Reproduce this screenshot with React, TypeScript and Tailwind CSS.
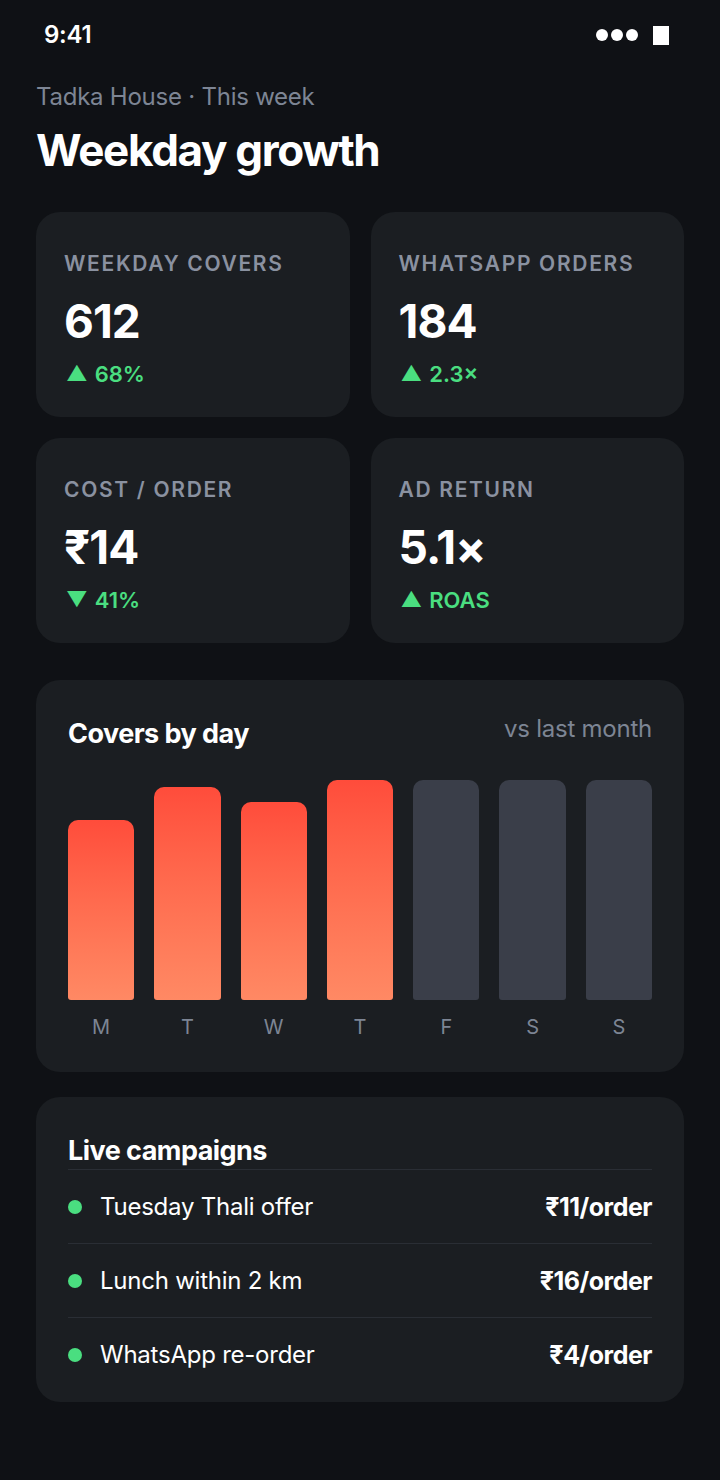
const stats = [
  { label: "WEEKDAY COVERS", value: "612", arrow: "▲", delta: "68%" },
  { label: "WHATSAPP ORDERS", value: "184", arrow: "▲", delta: "2.3×" },
  { label: "COST / ORDER", value: "₹14", arrow: "▼", delta: "41%" },
  { label: "AD RETURN", value: "5.1×", arrow: "▲", delta: "ROAS" },
];

const days = [
  { day: "M", pct: 82, live: true },
  { day: "T", pct: 97, live: true },
  { day: "W", pct: 90, live: true },
  { day: "T", pct: 100, live: true },
  { day: "F", pct: 100, live: false },
  { day: "S", pct: 100, live: false },
  { day: "S", pct: 100, live: false },
];

const campaigns = [
  { name: "Tuesday Thali offer", cost: "₹11/order" },
  { name: "Lunch within 2 km", cost: "₹16/order" },
  { name: "WhatsApp re-order", cost: "₹4/order" },
];

function StatCard({ label, value, arrow, delta }: { label: string; value: string; arrow: string; delta: string }) {
  return (
    <div className="bg-[#1b1e22] rounded-[24px] h-[205px] px-7 pt-[38px] flex flex-col">
      <p className="text-[21px] leading-[28px] font-semibold tracking-[0.08em] text-[#8a91a0]">{label}</p>
      <p className="mt-[17px] text-[46px] leading-[52px] font-bold tracking-[-0.02em] text-white">{value}</p>
      <p className="mt-[13px] flex items-center gap-[7px] text-[22px] leading-[28px] font-semibold text-[#4ade80]">
        <span className="text-[21px] leading-[28px] pl-[2px]">{arrow}</span>
        <span>{delta}</span>
      </p>
    </div>
  );
}

export default function App() {
  return (
    <div className="w-[720px] min-h-[1480px] bg-[#0f1115] font-['Inter',sans-serif] text-white">
      {/* Status bar */}
      <div className="h-[70px] pl-[44px] pr-[51px] flex items-center justify-between">
        <span className="text-[24px] leading-[28px] font-semibold tracking-[-0.01em]">9:41</span>
        <div className="flex items-center gap-[3px]">
          <span className="size-[12px] rounded-full bg-white" />
          <span className="size-[12px] rounded-full bg-white" />
          <span className="size-[12px] rounded-full bg-white" />
          <span className="ml-[12px] w-[16px] h-[19px] bg-white" />
        </div>
      </div>

      <div className="px-9">
        <p className="mt-[11px] text-[24px] leading-[32px] text-[#7d8594] tracking-[-0.01em]">Tadka House · This week</p>
        <h1 className="mt-[11px] text-[44px] leading-[52px] font-bold tracking-[-0.03em]">Weekday growth</h1>

        <div className="mt-9 grid grid-cols-2 gap-x-[21px] gap-y-[21px]">
          {stats.map((s) => (
            <StatCard key={s.label} {...s} />
          ))}
        </div>

        {/* Chart */}
        <div className="mt-[37px] bg-[#1b1e22] rounded-[24px] px-8 pt-[35px] pb-[31px]">
          <div className="flex items-start justify-between">
            <p className="mt-[3px] text-[27px] leading-[32px] font-bold tracking-[-0.02em]">Covers by day</p>
            <p className="text-[24px] leading-[28px] text-[#7d8594] tracking-[-0.01em]">vs last month</p>
          </div>
          <div className="mt-[30px] grid grid-cols-7 gap-x-[20px]">
            {days.map((d, i) => (
              <div key={i} className="flex flex-col items-center">
                <div className="h-[220px] w-full flex items-end">
                  <div
                    className={
                      d.live
                        ? "w-full rounded-t-[10px] rounded-b-[3px] bg-gradient-to-b from-[#ff4c3b] to-[#ff8964]"
                        : "w-full rounded-t-[10px] rounded-b-[3px] bg-[#3a3e49]"
                    }
                    style={{ height: `${d.pct}%` }}
                  />
                </div>
                <span className="mt-[13px] text-[20px] leading-[28px] text-[#7d8594]">{d.day}</span>
              </div>
            ))}
          </div>
        </div>

        {/* Campaigns */}
        <div className="mt-[25px] bg-[#1b1e22] rounded-[24px] px-8 pt-[38px] pb-[10px]">
          <p className="text-[27px] leading-[32px] font-bold tracking-[-0.02em] pb-[2px] border-b border-[#2a2e35]">Live campaigns</p>
          {campaigns.map((c, i) => (
            <div
              key={c.name}
              className={
                i < campaigns.length - 1
                  ? "h-[74px] flex items-center justify-between border-b border-[#2a2e35]"
                  : "h-[74px] flex items-center justify-between"
              }
            >
              <div className="flex items-center gap-[18px]">
                <span className="size-[14px] rounded-full bg-[#4ade80]" />
                <span className="text-[24px] leading-[32px] tracking-[-0.01em]">{c.name}</span>
              </div>
              <span className="text-[25px] leading-[32px] font-bold tracking-[-0.02em]">{c.cost}</span>
            </div>
          ))}
        </div>
      </div>
    </div>
  );
}
